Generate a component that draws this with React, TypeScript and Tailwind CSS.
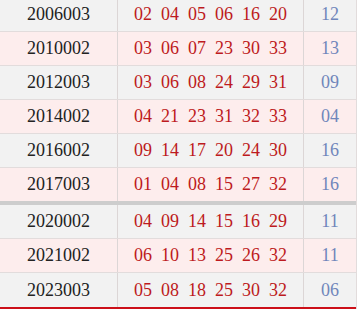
const rows = [
  { issue: '2006003', reds: ['02', '04', '05', '06', '16', '20'], blue: '12' },
  { issue: '2010002', reds: ['03', '06', '07', '23', '30', '33'], blue: '13' },
  { issue: '2012003', reds: ['03', '06', '08', '24', '29', '31'], blue: '09' },
  { issue: '2014002', reds: ['04', '21', '23', '31', '32', '33'], blue: '04' },
  { issue: '2016002', reds: ['09', '14', '17', '20', '24', '30'], blue: '16' },
  { issue: '2017003', reds: ['01', '04', '08', '15', '27', '32'], blue: '16' },
  { issue: '2020002', reds: ['04', '09', '14', '15', '16', '29'], blue: '11' },
  { issue: '2021002', reds: ['06', '10', '13', '25', '26', '32'], blue: '11' },
  { issue: '2023003', reds: ['05', '08', '18', '25', '30', '32'], blue: '06' },
];

export default function App() {
  return (
    <div className="w-[361px] h-[309px] overflow-hidden bg-white font-['Liberation_Serif',serif] text-[18px]">
      <div className="w-[357px] mt-[-2px] border-r border-[#e2dcdc]">
        {rows.map((r, i) => {
          const pink = i % 2 === 1;
          const sep = i === 5;
          const last = i === rows.length - 1;
          return (
            <div
              key={r.issue}
              className={`grid grid-cols-[118px_186px_52px] box-border ${
                pink ? 'bg-[#fdeded]' : 'bg-[#f2f2f2]'
              } ${
                sep
                  ? 'h-[37px] border-b-4 border-[#cdcdcd]'
                  : last
                  ? 'h-[36px] border-b-2 border-[#cc1019]'
                  : 'h-[34px] border-b border-[#e2dcdc]'
              }`}
            >
              <div className="flex items-center justify-center border-r border-[#dcd6d6] text-[#222]">
                {r.issue}
              </div>
              <div className="flex items-center justify-center gap-[9px] border-r border-[#dcd6d6] text-[#bd1a20]">
                {r.reds.map((n, j) => (
                  <span key={j}>{n}</span>
                ))}
              </div>
              <div className="flex items-center justify-center text-[#7086bb]">{r.blue}</div>
            </div>
          );
        })}
      </div>
    </div>
  );
}
